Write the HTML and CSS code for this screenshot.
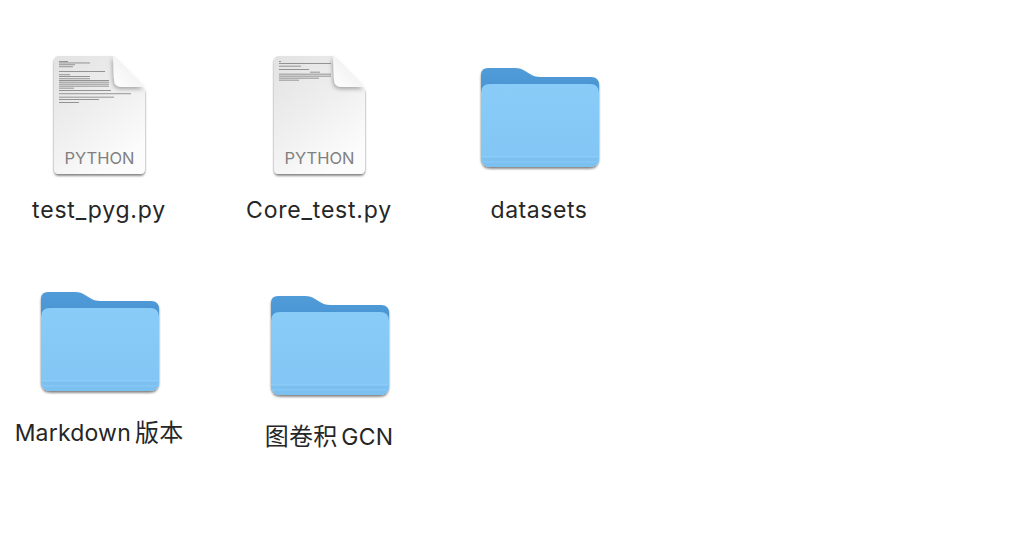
FILE: index.html
```html
<!DOCTYPE html>
<html lang="zh">
<head>
<meta charset="utf-8">
<title>Files</title>
<link rel="stylesheet" href="styles.css">
</head>
<body>
<svg class="defs" width="0" height="0" aria-hidden="true">
  <defs>
    <linearGradient id="paper" x1="0" y1="0" x2="0.6" y2="1">
      <stop offset="0" stop-color="#e2e2e2"/>
      <stop offset="0.5" stop-color="#eeeeee"/>
      <stop offset="1" stop-color="#fcfcfc"/>
    </linearGradient>
    <linearGradient id="fold" x1="0" y1="1" x2="1" y2="0">
      <stop offset="0" stop-color="#ffffff"/>
      <stop offset="0.55" stop-color="#f3f3f3"/>
      <stop offset="1" stop-color="#d9d9d9"/>
    </linearGradient>
    <linearGradient id="folderBack" x1="0" y1="0" x2="0" y2="1">
      <stop offset="0" stop-color="#519cd9"/>
      <stop offset="1" stop-color="#468fce"/>
    </linearGradient>
    <linearGradient id="folderFront" x1="0" y1="0" x2="0" y2="1">
      <stop offset="0" stop-color="#89ccf8"/>
      <stop offset="1" stop-color="#81c5f4"/>
    </linearGradient>
    <filter id="soft" x="-10%" y="-10%" width="120%" height="120%">
      <feDropShadow dx="0" dy="1.800" stdDeviation="1.300" flood-color="#000" flood-opacity="0.5"/>
    </filter>
    <filter id="foldShade" x="-30%" y="-30%" width="160%" height="160%">
      <feDropShadow dx="-1" dy="2" stdDeviation="2.200" flood-color="#000" flood-opacity="0.32"/>
    </filter>
    <filter id="inkBlur"><feGaussianBlur stdDeviation="0.4"/></filter>
    <symbol id="folder" viewBox="0 0 126 108">
      <g filter="url(#soft)">
        <path fill="url(#folderBack)" d="M4 18 V11 Q4 4 11 4 H38 Q44 4 48 7 L53 10 Q57 13 63 13 H114 Q122 13 122 21 V40 H4 Z"/>
        <path fill="url(#folderFront)" d="M4 29 Q4 20 13 20 H113 Q122 20 122 29 V93 Q122 103 112 103 H14 Q4 103 4 93 Z"/>
      </g>
      <path fill="#7cc0f0" d="M4 92 H122 V93 Q122 103 112 103 H14 Q4 103 4 93 Z"/>
      <rect x="4" y="92" width="118" height="1.500" fill="#8ccbf7"/>
      <rect x="4" y="97" width="118" height="1.500" fill="#85c6f4"/>
    </symbol>
    <symbol id="page" viewBox="0 0 100 128">
      <path filter="url(#soft)" fill="url(#paper)" d="M4 9 Q4 4 9 4 H63 L95 38 V117 Q95 122 90 122 H9 Q4 122 4 117 Z"/>
      <path filter="url(#foldShade)" fill="url(#fold)" d="M63 4 L95 36 V35 H72 Q64 35 64 27 Z"/>
    </symbol>
  </defs>
</svg>

<main class="canvas">
  <figure class="item item-pyg">
    <div class="file">
      <svg class="file-art" viewBox="0 0 100 128"><use href="#page"/>
        <g class="ink">
          <rect x="9" y="9" width="9" height="0.9"/><rect x="9" y="10.500" width="31" height="0.9"/><rect x="9" y="12.300" width="16" height="0.9"/>
          <rect x="9" y="14.300" width="14" height="0.9"/><rect x="9" y="19" width="46" height="0.9"/><rect x="9" y="22.300" width="11" height="0.9"/>
          <rect x="9" y="24" width="31" height="0.9"/><rect x="9" y="26.300" width="31" height="0.9"/><rect x="9" y="28" width="50" height="0.9"/>
          <rect x="9" y="29.700" width="50" height="0.9"/><rect x="9" y="31.700" width="50" height="0.9"/><rect x="9" y="33.700" width="50" height="0.9"/>
          <rect x="9" y="35.700" width="15" height="0.9"/><rect x="9" y="38" width="52" height="0.9"/><rect x="9" y="41.300" width="72" height="0.9"/>
          <rect x="9" y="44.700" width="55" height="0.9"/><rect x="9" y="47" width="40" height="0.9"/><rect x="9" y="50" width="20" height="0.9"/>
        </g>
      </svg>
      <span class="badge">PYTHON</span>
    </div>
    <figcaption class="label label-wide">test_pyg.py</figcaption>
  </figure>

  <figure class="item item-core">
    <div class="file">
      <svg class="file-art" viewBox="0 0 100 128"><use href="#page"/>
        <g class="ink">
          <rect x="9" y="9" width="2" height="0.9"/><rect x="9" y="11" width="52" height="0.9"/><rect x="9" y="13.700" width="22" height="0.9"/>
          <rect x="9" y="17" width="30" height="0.9"/><rect x="40" y="19.700" width="10" height="0.9"/><rect x="9" y="21.700" width="52" height="0.9"/>
          <rect x="9" y="23.700" width="52" height="0.9"/><rect x="9" y="25.700" width="40" height="0.9"/><rect x="9" y="27.700" width="20" height="0.9"/>
        </g>
      </svg>
      <span class="badge">PYTHON</span>
    </div>
    <figcaption class="label label-wide">Core_test.py</figcaption>
  </figure>

  <figure class="item item-datasets">
    <svg class="folder"><use href="#folder"/></svg>
    <figcaption class="label label-mid">datasets</figcaption>
  </figure>

  <figure class="item item-md">
    <svg class="folder"><use href="#folder"/></svg>
    <figcaption class="label label-cjk">Markdown<span class="cjk">版本</span></figcaption>
  </figure>

  <figure class="item item-gcn">
    <svg class="folder"><use href="#folder"/></svg>
    <figcaption class="label label-cjk"><span class="cjk cjk-first">图卷积</span>GCN</figcaption>
  </figure>
</main>
</body>
</html>
```
FILE: styles.css
```css
html, body {
  margin: 0;
  padding: 0;
  background: #fff;
}

.defs {
  position: absolute;
}

.canvas {
  position: relative;
  width: 1014px;
  height: 556px;
  overflow: hidden;
  font-family: Inter, "Noto Sans CJK SC", sans-serif;
  color: #262626;
}

.item {
  position: absolute;
  width: 240px;
  margin: 0;
  display: flex;
  flex-direction: column;
  align-items: center;
}

.item-pyg { left: -20px; top: 52px; }
.item-core { left: 200px; top: 52px; }
.item-datasets { left: 420px; top: 64px; }
.item-md { left: -20px; top: 288px; }
.item-gcn { left: 210px; top: 292px; }

.file {
  position: relative;
  width: 100px;
  height: 128px;
}

.file-art {
  display: block;
  width: 100px;
  height: 128px;
}

.ink {
  filter: url(#inkBlur);
}

.ink rect {
  fill: #8a8a8a;
}

.badge {
  position: absolute;
  left: 0;
  right: 1px;
  top: 96px;
  text-align: center;
  font-size: 16.5px;
  line-height: 20px;
  color: #808080;
}

.folder {
  display: block;
  width: 126px;
  height: 108px;
}

.label {
  font-size: 23px;
  line-height: 30px;
  white-space: nowrap;
  transform: translateX(-1px);
}

.label-wide {
  margin-top: 15px;
  letter-spacing: 0.8px;
}

.label-mid {
  margin-top: 23px;
  letter-spacing: 0.55px;
}

.label-cjk {
  margin-top: 22px;
  letter-spacing: 0.2px;
}

.cjk {
  margin-left: 4px;
  font-size: 24px;
}

.cjk-first {
  margin-left: 0;
  margin-right: 4px;
}
```
